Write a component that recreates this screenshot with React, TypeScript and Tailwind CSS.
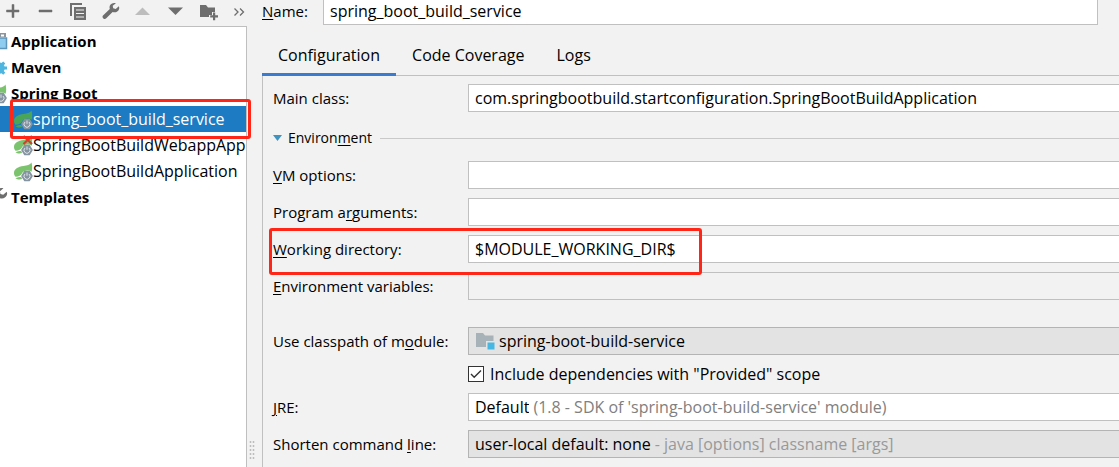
import type { ReactNode } from "react";
import { clsx } from "clsx";

const TABS = ["Configuration", "Code Coverage", "Logs"];

/** Label text with the keyboard mnemonic underlined */
function Mnemonic({ text, at }: { text: string; at?: number }) {
  if (at === undefined) return <>{text}</>;
  return (
    <>
      {text.slice(0, at)}
      <span className="underline underline-offset-2">{text[at]}</span>
      {text.slice(at + 1)}
    </>
  );
}

/* ---------- icons ---------- */

function SpringIcon({ selected = false, broken = false }: { selected?: boolean; broken?: boolean }) {
  const leaf = selected ? "#4aa657" : "#7cc36d";
  return (
    <svg viewBox="0 0 18 18" className="w-[18px] h-[18px] shrink-0 overflow-visible">
      <path d="M17.5 .5C16 3 13 3.500 9.500 4 4 4.800 0 7 0 11c0 1.600.6 2.800 1.600 3.700C5 14.700 7 13.500 8 11.500 9 9.500 11 8.600 13.400 8.600c1.600 0 3 .4 4.200 1.200C18.500 6.500 18.300 3.500 17.500.5z" fill={leaf} />
      <path d="M1.500 16.200c1.600-.9 3.800-1.100 5.800-1.200l.8 2c-2.400.8-4.800.6-6.600-.8z" fill={leaf} />
      <path
        d="M10.800 9.500h4.400l2.800 4.500-2.800 4.500h-4.400L8 14z"
        fill="#8494a1"
        stroke="#8494a1"
        strokeWidth="1.5"
        strokeLinejoin="round"
      />
      <path d="M11 12a3 3 0 1 0 4 0M13 10.500v3.300" fill="none" stroke="#dfe4e8" strokeWidth="1" />
      {broken && <path d="M9.500 0l8.500 8M18 0L9.500 8" stroke="#d0402f" strokeWidth="2.200" />}
    </svg>
  );
}

function ApplicationIcon() {
  return (
    <svg viewBox="0 0 20 20" className="w-5 h-5 shrink-0 -ml-3">
      <path d="M2 2h16v4H2z" fill="#8b959d" />
      <path d="M13 3.500h3v2h-3z" fill="#fff" />
      <path d="M3 7h15.500v10.500H3z" fill="#8fcdf0" stroke="#5e95bb" strokeWidth="1.500" />
    </svg>
  );
}

function MavenIcon() {
  return (
    <svg viewBox="0 0 20 20" className="w-5 h-5 shrink-0 -ml-3">
      <path
        d="M8.500 3h3v2.200l2 .8 1.700-1.600 2.100 2.100-1.500 1.700.8 1.300H19v3h-2.400l-.8 1.500 1.500 1.700-2.100 2.100-1.700-1.600-2 .8V19h-3V3z"
        fill="#4fb6e0"
      />
    </svg>
  );
}

function WrenchPath() {
  return (
    <path
      d="M16.800 4.200l-3.100 2.700-2.500-.7-.5-2.400 3.200-2.600c-2.300-.8-5 .1-6 2.400-.5 1.200-.4 2.300-.1 3.400L1 13.600c-1.600 1.800 1.200 4.600 3 3L10.600 10c2.600 1 5.400-.1 6.300-2.500.5-1.200.4-2.300-.1-3.300z"
      fill="#6e6e6e"
    />
  );
}

const TOOLS: { label: string; icon: ReactNode }[] = [
  { label: "Add", icon: <path d="M7 2.500h2v5.500h5V10H9v5.500H7V10H1.500V8H7z" fill="#6e6e6e" stroke="#6e6e6e" strokeWidth=".5" /> },
  { label: "Remove", icon: <path d="M2 8h13v2H2z" fill="#6e6e6e" stroke="#6e6e6e" strokeWidth=".5" /> },
  {
    label: "Copy",
    icon: (
      <>
        <path d="M1 1h12v2H3v11H1z" fill="#6e6e6e" />
        <path d="M5 5h12v13H5z" fill="#6e6e6e" />
        <path d="M7 8h8M7 11.500h8M7 15h8" stroke="#f2f2f2" strokeWidth="1.200" />
      </>
    ),
  },
  {
    label: "Edit templates",
    icon: (
      <g transform="translate(1 0)">
        <WrenchPath />
      </g>
    ),
  },
  { label: "Move up", icon: <path d="M2 13L9.500 5.500 17 13z" fill="#bdbdbd" /> },
  { label: "Move down", icon: <path d="M3 5.500h15L10.500 13z" fill="#6e6e6e" /> },
  {
    label: "Create folder",
    icon: (
      <>
        <path d="M3 3h6l2 2.500h7V10h-3v3h-3v2H3z" fill="#6e6e6e" />
        <path d="M16 10.500h2.200v2.800H21v2.200h-2.800v2.800H16v-2.800h-2.800v-2.200H16z" fill="#6e6e6e" />
      </>
    ),
  },
  { label: "More", icon: <path d="M5.500 6.500L9 10l-3.500 3.500M11 6.500l3.500 3.500-3.500 3.500" fill="none" stroke="#6e6e6e" strokeWidth="1.300" /> },
];

/* ---------- sidebar ---------- */

function GroupRow({ icon, label }: { icon: ReactNode; label: string }) {
  return (
    <li className="flex items-center gap-[3px] h-[26px] font-bold">
      {icon}
      <span>{label}</span>
    </li>
  );
}

function ConfigRow({ label, selected = false, broken = false }: { label: string; selected?: boolean; broken?: boolean }) {
  return (
    <li className={clsx("relative flex items-center gap-px h-[26px] pl-3.5 text-base", selected && "bg-[#1c7bc3] text-white")}>
      <SpringIcon selected={selected} broken={broken} />
      <span className="overflow-hidden whitespace-nowrap">{label}</span>
      {selected && (
        <span className="absolute left-2.5 -top-[7px] z-10 w-[241px] h-10 rounded-[3px] border-3 border-[#ff2617] pointer-events-none" />
      )}
    </li>
  );
}

function Sidebar() {
  return (
    <aside className="w-[247px] shrink-0 flex flex-col">
      <div className="flex items-center gap-3.5 h-[26px] pl-[5px] pb-1">
        {TOOLS.map((tool) => (
          <button key={tool.label} type="button" aria-label={tool.label} className="shrink-0">
            <svg viewBox="0 0 18 18" className="w-[18px] h-[18px] overflow-visible">
              {tool.icon}
            </svg>
          </button>
        ))}
      </div>
      <ul className="flex-1 bg-white border-t border-r border-[#bfbfbf] pt-px">
        <GroupRow icon={<ApplicationIcon />} label="Application" />
        <GroupRow icon={<MavenIcon />} label="Maven" />
        <GroupRow
          icon={
            <span className="-ml-3 w-5 shrink-0">
              <SpringIcon />
            </span>
          }
          label="Spring Boot"
        />
        <ConfigRow label="spring_boot_build_service" selected />
        <ConfigRow label="SpringBootBuildWebappApp" broken />
        <ConfigRow label="SpringBootBuildApplication" />
        <GroupRow
          icon={
            <svg viewBox="0 0 18 18" className="w-5 h-5 shrink-0 -ml-3">
              <WrenchPath />
            </svg>
          }
          label="Templates"
        />
      </ul>
    </aside>
  );
}

/* ---------- form ---------- */

interface RowProps {
  id: string;
  label: string;
  mnemonic?: number;
  highlighted?: boolean;
  children: ReactNode;
}

function Row({ id, label, mnemonic, highlighted = false, children }: RowProps) {
  return (
    <div className="relative flex items-center h-7">
      <label htmlFor={id} className="w-[195px] shrink-0">
        <Mnemonic text={label} at={mnemonic} />
      </label>
      {children}
      {highlighted && (
        <span className="absolute -left-1 -top-[7px] z-10 w-[433px] h-[47px] rounded-[3px] border-3 border-[#ff2617] pointer-events-none" />
      )}
    </div>
  );
}

function TextField({ id, value = "", disabled = false }: { id: string; value?: string; disabled?: boolean }) {
  return (
    <input
      id={id}
      type="text"
      defaultValue={value}
      disabled={disabled}
      className={clsx(
        "flex-1 min-w-0 h-7 px-1.5 text-base border border-r-0 border-[#c0c0c0] outline-none",
        disabled ? "bg-[#f2f2f2]" : "bg-white"
      )}
    />
  );
}

interface ComboProps {
  id: string;
  value: string;
  hint?: string;
  hintClass?: string;
  editable?: boolean;
  icon?: ReactNode;
}

function Combo({ id, value, hint, hintClass, editable = false, icon }: ComboProps) {
  return (
    <div
      className={clsx(
        "flex flex-1 min-w-0 items-center gap-1 h-7 px-1.5 text-base border border-r-0",
        editable ? "bg-white border-[#c0c0c0]" : "bg-[#e3e3e3] border-[#b4b4b4]"
      )}
    >
      {icon}
      <select id={id} className="appearance-none field-sizing-content bg-transparent outline-none">
        <option>{value}</option>
      </select>
      {hint && <span className={clsx("whitespace-nowrap", hintClass)}>{hint}</span>}
    </div>
  );
}

function ModuleIcon() {
  return (
    <svg viewBox="0 0 20 18" className="w-5 h-[18px] shrink-0">
      <path d="M1 1h7l2 2.500h8.500V9H11v6H1z" fill="#a6b1b8" />
      <path d="M12.500 10.500h7v7h-7z" fill="#46b6e2" />
    </svg>
  );
}

export default function App() {
  return (
    <div className="flex min-h-screen overflow-hidden bg-[#f2f2f2] font-['Open_Sans','Noto_Sans',sans-serif] text-[15px] leading-5 text-black">
      <Sidebar />

      {/* Splitter grip */}
      <div className="w-[15px] shrink-0 flex items-end pl-0.5 pb-1.5">
        <svg viewBox="0 0 6 20" className="w-1.5 h-5">
          <path d="M1.500 0v20M4.500 0v20" stroke="#bdbdbd" strokeWidth="1.500" strokeDasharray="2 2" />
        </svg>
      </div>

      <main className="flex-1 min-w-0 flex flex-col">
        <div className="flex items-start h-6 pr-[21px]">
          <label htmlFor="name" className="w-[61px] shrink-0 pt-px">
            <Mnemonic text="Name:" at={0} />
          </label>
          <input
            id="name"
            type="text"
            defaultValue="spring_boot_build_service"
            className="flex-1 min-w-0 h-[25px] px-1.5 pb-0.5 text-base bg-white border border-t-0 border-[#c0c0c0] outline-none"
          />
        </div>

        <div role="tablist" className="flex mt-3 h-10 text-base border-b border-[#c0c0c0]">
          {TABS.map((tab, i) => (
            <button
              key={tab}
              type="button"
              role="tab"
              aria-selected={i === 0}
              className={clsx("h-10 px-4 border-b-3", i === 0 ? "border-[#3a7bd0]" : "border-transparent")}
            >
              {tab}
            </button>
          ))}
        </div>

        <form className="flex-1 pt-2 pb-2 pl-2.5 border-l border-[#c0c0c0]">
          <Row id="main-class" label="Main class:">
            <TextField id="main-class" value="com.springbootbuild.startconfiguration.SpringBootBuildApplication" />
          </Row>

          <div className="flex items-center h-5 mt-4">
            <button type="button" aria-expanded="true" className="flex items-center gap-1.5 text-sm">
              <svg viewBox="0 0 9 6" className="w-[9px] h-1.5">
                <path d="M0 0h9L4.500 6z" fill="#3f93bf" />
              </svg>
              <span>
                <Mnemonic text="Environment" at={7} />
              </span>
            </button>
            <hr className="flex-1 ml-2 border-[#c9c9c9]" />
          </div>

          <div className="flex flex-col gap-[9px] mt-[13px]">
            <Row id="vm-options" label="VM options:" mnemonic={0}>
              <TextField id="vm-options" />
            </Row>
            <Row id="program-args" label="Program arguments:" mnemonic={9}>
              <TextField id="program-args" />
            </Row>
            <Row id="working-dir" label="Working directory:" mnemonic={0} highlighted>
              <TextField id="working-dir" value="$MODULE_WORKING_DIR$" />
            </Row>
            <Row id="env-vars" label="Environment variables:" mnemonic={0}>
              <TextField id="env-vars" disabled />
            </Row>
          </div>

          <div className="mt-[27px]">
            <Row id="module" label="Use classpath of module:" mnemonic={18}>
              <Combo id="module" value="spring-boot-build-service" icon={<ModuleIcon />} />
            </Row>
          </div>

          <div className="flex items-center h-[38px] pl-[195px]">
            <label className="flex items-center gap-1.5 text-base">
              <span className="relative flex w-4 h-4">
                <input type="checkbox" defaultChecked className="peer appearance-none w-4 h-4 bg-white border border-[#333333]" />
                <svg viewBox="0 0 16 16" className="absolute inset-0 w-4 h-4 hidden peer-checked:block pointer-events-none">
                  <path d="M3 8l3.200 3.200L13 4.500" fill="none" stroke="#333333" strokeWidth="1.400" />
                </svg>
              </span>
              Include dependencies with "Provided" scope
            </label>
          </div>

          <div className="flex flex-col gap-[9px]">
            <Row id="jre" label="JRE:" mnemonic={0}>
              <Combo
                id="jre"
                value="Default"
                hint="(1.8 - SDK of 'spring-boot-build-service' module)"
                hintClass="text-[#808080]"
                editable
              />
            </Row>
            <Row id="shorten" label="Shorten command line:" mnemonic={16}>
              <Combo
                id="shorten"
                value="user-local default: none"
                hint="- java [options] classname [args]"
                hintClass="text-[#999999]"
              />
            </Row>
          </div>
        </form>
      </main>
    </div>
  );
}
